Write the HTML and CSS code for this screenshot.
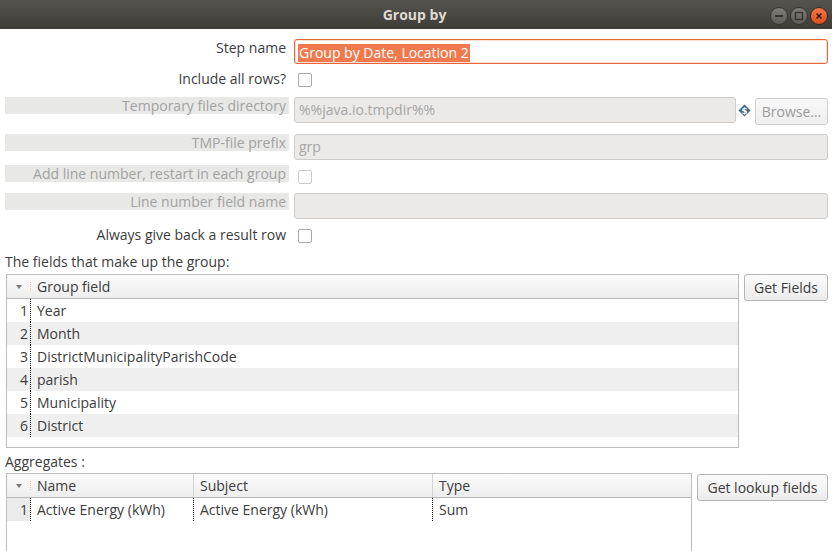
FILE: index.html
```html
<!DOCTYPE html>
<html>
<head>
<meta charset="utf-8">
<title>Group by</title>
<link rel="stylesheet" href="styles.css">
</head>
<body>
<div class="window">
  <header class="titlebar">
    <div></div>
    <div class="title">Group by</div>
    <div class="wbtns">
      <span class="wbtn"><svg width="10" height="10" viewBox="0 0 10 10"><rect x="1" y="4" width="8" height="2" fill="#34332f"/></svg></span>
      <span class="wbtn"><svg width="10" height="10" viewBox="0 0 10 10"><rect x="1.5" y="1.5" width="7" height="7" fill="none" stroke="#34332f" stroke-width="1.4"/></svg></span>
      <span class="wbtn close"><svg width="10" height="10" viewBox="0 0 10 10"><path d="M2.5 2.5 L7.5 7.5 M7.5 2.5 L2.5 7.5" stroke="#3a1a0e" stroke-width="1.5"/></svg></span>
    </div>
  </header>
  <main class="content">
    <div class="form">
      <div class="frow r1">
        <div class="lbl">Step name</div>
        <div class="input focus"><span class="sel">Group by Date, Location 2</span></div>
      </div>
      <div class="frow r2">
        <div class="lbl">Include all rows?</div>
        <div><span class="cb"></span></div>
      </div>
      <div class="frow r3">
        <div class="lbl disabled">Temporary files directory</div>
        <div class="field-line">
          <div class="input dis grow">%%java.io.tmpdir%%</div>
          <span class="varicon"><svg width="13" height="13" viewBox="0 0 13 13"><path d="M6.5 0.5 L12.5 6.5 L6.5 12.5 L0.5 6.5 Z" fill="#3f6b8d"/><text x="6.5" y="9.6" text-anchor="middle" font-family="DejaVu Sans, sans-serif" font-size="8.5" font-weight="bold" fill="#ffffff">$</text></svg></span>
          <span class="btn dis browse">Browse...</span>
        </div>
      </div>
      <div class="frow r4">
        <div class="lbl disabled">TMP-file prefix</div>
        <div class="input dis">grp</div>
      </div>
      <div class="frow r5">
        <div class="lbl disabled">Add line number, restart in each group</div>
        <div><span class="cb dcb"></span></div>
      </div>
      <div class="frow r6">
        <div class="lbl disabled">Line number field name</div>
        <div class="input dis"></div>
      </div>
      <div class="frow r7">
        <div class="lbl">Always give back a result row</div>
        <div><span class="cb"></span></div>
      </div>
    </div>

    <div class="section-label s1">The fields that make up the group:</div>
    <div class="table-area a1">
      <div class="table t1">
        <div class="thead">
          <div class="th num"><span class="tri"></span></div>
          <div class="th">Group field</div>
        </div>
        <div class="trow"><div class="td num">1</div><div class="td">Year</div></div>
        <div class="trow alt"><div class="td num">2</div><div class="td">Month</div></div>
        <div class="trow"><div class="td num">3</div><div class="td">DistrictMunicipalityParishCode</div></div>
        <div class="trow alt"><div class="td num">4</div><div class="td">parish</div></div>
        <div class="trow"><div class="td num">5</div><div class="td">Municipality</div></div>
        <div class="trow alt"><div class="td num">6</div><div class="td">District</div></div>
      </div>
      <span class="btn getfields">Get Fields</span>
    </div>

    <div class="section-label s2">Aggregates :</div>
    <div class="table-area a2">
      <div class="table t2">
        <div class="thead">
          <div class="th num"><span class="tri"></span></div>
          <div class="th sep">Name</div>
          <div class="th sep">Subject</div>
          <div class="th">Type</div>
        </div>
        <div class="trow">
          <div class="td num shade">1</div>
          <div class="td">Active Energy (kWh)</div>
          <div class="td">Active Energy (kWh)</div>
          <div class="td">Sum</div>
        </div>
      </div>
      <span class="btn lookup">Get lookup fields</span>
    </div>
  </main>
</div>
</body>
</html>
```
FILE: styles.css
```css
* { box-sizing: border-box; }
html, body { margin: 0; padding: 0; }
body {
  width: 832px;
  height: 551px;
  overflow: hidden;
  background: #ffffff;
  font-family: "Open Sans", "Noto Sans", sans-serif;
  font-size: 14px;
  color: #3c3c3c;
}

/* title bar */
.titlebar {
  height: 29px;
  display: grid;
  grid-template-columns: 1fr auto 1fr;
  align-items: center;
  background: linear-gradient(#56544e, #3d3c37);
}
.title {
  color: #dfdbd2;
  font-weight: bold;
  font-size: 14px;
  line-height: 29px;
  padding-right: 3px;
}
.wbtns {
  justify-self: end;
  display: flex;
  gap: 2px;
  padding-right: 4px;
  margin-top: 2px;
}
.wbtn {
  width: 18px;
  height: 18px;
  border-radius: 50%;
  background: linear-gradient(#807e78, #5e5c57);
  border: 1px solid #363530;
  display: flex;
  align-items: center;
  justify-content: center;
}
.wbtn.close {
  background: linear-gradient(#f4764a, #de4f1d);
  border-color: #3a2a20;
}

/* content */
.content {
  padding: 10px 4px 0 5px;
}
.frow {
  display: grid;
  grid-template-columns: 284px 1fr;
  column-gap: 5px;
  align-items: start;
}
.r1 { height: 31px; }
.r2 { height: 27px; }
.r3 { height: 37px; }
.r4 { height: 31px; }
.r5 { height: 28px; }
.r6 { height: 33px; }
.r7 { height: 27px; }

.lbl {
  height: 17px;
  line-height: 17px;
  text-align: right;
  padding-right: 3px;
  white-space: nowrap;
}
.lbl.disabled {
  background: #e8e8e7;
  color: #a2a2a2;
}

.input {
  height: 26px;
  border: 1px solid #cecbc8;
  border-radius: 3px;
  padding: 0 4px 0 4px;
  line-height: 24px;
  white-space: nowrap;
  overflow: hidden;
}
.input.focus {
  height: 25px;
  border-color: #e8643a;
  box-shadow: inset 0 0 0 1px #fbe0d5;
  line-height: 23px;
  padding-left: 3px;
}
.sel {
  background: #f07a4d;
  color: #ffffff;
  display: inline-block;
  line-height: 18px;
  vertical-align: middle;
  padding: 0 1px;
}
.input.dis {
  background: #ebeae9;
  color: #a6a6a6;
}
.field-line {
  display: flex;
  align-items: flex-start;
}
.grow { flex: 1; }
.varicon {
  width: 19px;
  display: flex;
  justify-content: center;
  padding-top: 7px;
  padding-right: 2px;
}

.cb {
  display: block;
  width: 14px;
  height: 14px;
  margin: 3px 0 0 4px;
  border: 1px solid #a8a8a8;
  border-radius: 2px;
  background: #ffffff;
}
.cb.dcb {
  margin-top: 5px;
  border-color: #cdcdcd;
}

/* buttons */
.btn {
  display: flex;
  align-items: center;
  justify-content: center;
  height: 27px;
  border: 1px solid #b7b5b2;
  border-radius: 3px;
  background: linear-gradient(#fbfbfb, #ececec);
  color: #3c3c3c;
  white-space: nowrap;
}
.btn.dis {
  color: #9a9a9a;
  border-color: #cfcdca;
  background: linear-gradient(#f8f8f8, #efefef);
}
.browse { width: 73px; margin-top: 1px; }
.getfields { width: 84px; }
.lookup { width: 131px; margin-top: 1px; }

/* section labels */
.section-label {
  height: 17px;
  line-height: 17px;
  white-space: nowrap;
}
.s2 { margin-top: 5px; }

.table-area {
  display: flex;
  align-items: flex-start;
  gap: 5px;
  padding-left: 1px;
}
.a1 { margin-top: 4px; }
.a2 { margin-top: 3px; }

.table {
  flex: 1;
  border: 1px solid #bdbdbd;
  background: #ffffff;
  overflow: hidden;
}
.t1 { height: 174px; }
.t2 { height: 78px; border-bottom: none; }

.thead, .trow {
  display: grid;
}
.t1 .thead, .t1 .trow { grid-template-columns: 24px 1fr; }
.t2 .thead, .t2 .trow { grid-template-columns: 24px 163px 239px 1fr; }

.thead {
  height: 24px;
  background: linear-gradient(#fcfcfc, #ededed);
  border-bottom: 1px solid #b9b9b9;
}
.th {
  line-height: 23px;
  padding-left: 6px;
  white-space: nowrap;
}
.th.sep { border-right: 1px solid #d4d4d4; }
.th.num {
  padding: 0;
  position: relative;
  display: flex;
  align-items: center;
  justify-content: center;
}
.th.num::after {
  content: "";
  position: absolute;
  right: 0;
  top: 7px;
  height: 9px;
  border-right: 1px dotted #f0c49a;
}
.tri {
  width: 0;
  height: 0;
  border-left: 3px solid transparent;
  border-right: 3px solid transparent;
  border-top: 4px solid #7a7a7a;
  margin-left: -1px;
}

.trow { height: 23px; }
.trow.alt { background: #efefef; }
.td {
  line-height: 23px;
  padding-left: 6px;
  white-space: nowrap;
  border-right: 1px dotted #111111;
}
.td:last-child { border-right: none; }
.td.num {
  text-align: right;
  padding: 0 2px 0 0;
}
.td.shade { background: #ebebeb; }
```
